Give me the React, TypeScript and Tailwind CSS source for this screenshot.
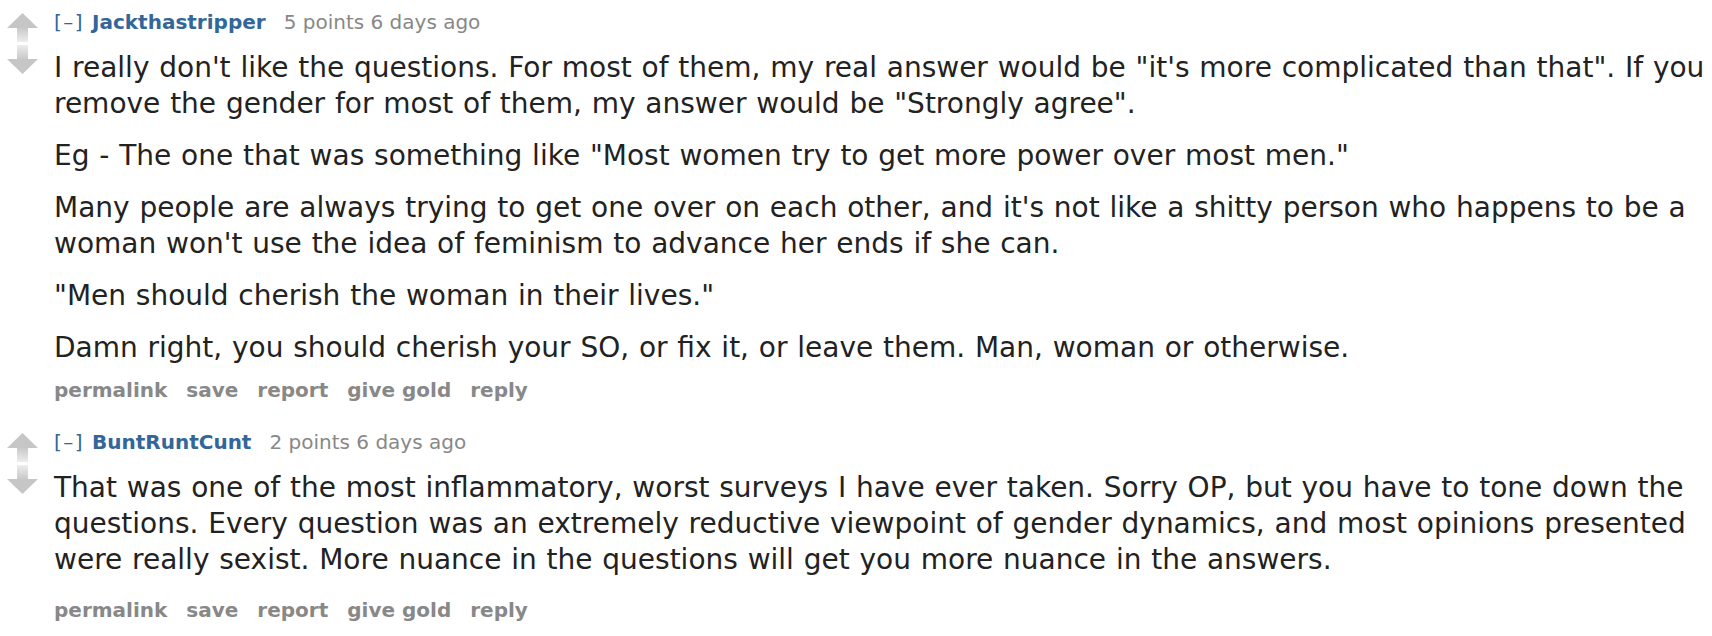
import React from "react";

type Comment = {
  author: string;
  points: string;
  age: string;
  paragraphs: string[][];
};

const comments: Comment[] = [
  {
    author: "Jackthastripper",
    points: "5 points",
    age: "6 days ago",
    paragraphs: [
      [
        "I really don't like the questions. For most of them, my real answer would be \"it's more complicated than that\". If you",
        "remove the gender for most of them, my answer would be \"Strongly agree\".",
      ],
      ["Eg - The one that was something like \"Most women try to get more power over most men.\""],
      [
        "Many people are always trying to get one over on each other, and it's not like a shitty person who happens to be a",
        "woman won't use the idea of feminism to advance her ends if she can.",
      ],
      ["\"Men should cherish the woman in their lives.\""],
      ["Damn right, you should cherish your SO, or fix it, or leave them. Man, woman or otherwise."],
    ],
  },
  {
    author: "BuntRuntCunt",
    points: "2 points",
    age: "6 days ago",
    paragraphs: [
      [
        "That was one of the most inflammatory, worst surveys I have ever taken. Sorry OP, but you have to tone down the",
        "questions. Every question was an extremely reductive viewpoint of gender dynamics, and most opinions presented",
        "were really sexist. More nuance in the questions will get you more nuance in the answers.",
      ],
    ],
  },
];

const actions = ["permalink", "save", "report", "give gold", "reply"];

function VoteArrows() {
  return (
    <div className="flex w-[54px] shrink-0 flex-col items-start pl-[7px] pt-[13px]">
      <svg width="31" height="29" viewBox="0 0 31 29">
        <defs>
          <linearGradient id="upStem" x1="0" y1="0" x2="0" y2="1">
            <stop offset="0" stopColor="#c6c6c6" />
            <stop offset="1" stopColor="#ededed" />
          </linearGradient>
        </defs>
        <polygon points="15.5,0 31,15 0,15" fill="#c6c6c6" />
        <rect x="10" y="14" width="11" height="15" fill="url(#upStem)" />
      </svg>
      <svg width="31" height="29" viewBox="0 0 31 29" className="mt-[3px]">
        <defs>
          <linearGradient id="downStem" x1="0" y1="0" x2="0" y2="1">
            <stop offset="0" stopColor="#ededed" />
            <stop offset="1" stopColor="#c6c6c6" />
          </linearGradient>
        </defs>
        <rect x="10" y="0" width="11" height="15" fill="url(#downStem)" />
        <polygon points="0,14 31,14 15.5,29" fill="#c6c6c6" />
      </svg>
    </div>
  );
}

function CommentBlock({ c, last }: { c: Comment; last: boolean }) {
  return (
    <div className="flex">
      <VoteArrows />
      <div className="min-w-0 flex-1">
        <div className="mt-[8px] flex h-[28px] items-center whitespace-nowrap text-[20px] leading-[28px]">
          <span className="w-[38px] tracking-[1.5px] text-[#369]">[–]</span>
          <span className="font-bold text-[#369]">{c.author}</span>
          <span className="ml-[18px] text-[#888]">
            {c.points} {c.age}
          </span>
        </div>
        <div className="mt-[14px] flex flex-col gap-[16px] text-[28px] leading-[36px] text-[#222] [word-spacing:0.9px]">
          {c.paragraphs.map((p, i) => (
            <p key={i} className="whitespace-nowrap">
              {p.map((line, j) => (
                <React.Fragment key={j}>
                  {line}
                  {j < p.length - 1 && <br />}
                </React.Fragment>
              ))}
            </p>
          ))}
        </div>
        <div
          className={`flex h-[24px] items-center gap-[19px] text-[20px] font-bold leading-[24px] text-[#888] ${
            last ? "mt-[20px]" : "mt-[12px]"
          }`}
        >
          {actions.map((a) => (
            <span key={a}>{a}</span>
          ))}
        </div>
      </div>
    </div>
  );
}

export default function App() {
  return (
    <div
      className="h-[636px] w-[1712px] overflow-hidden bg-white"
      style={{ fontFamily: '"DejaVu Sans", Verdana, sans-serif' }}
    >
      {comments.map((c, i) => (
        <div key={c.author} className={i > 0 ? "mt-[18px]" : ""}>
          <CommentBlock c={c} last={i === comments.length - 1} />
        </div>
      ))}
    </div>
  );
}
